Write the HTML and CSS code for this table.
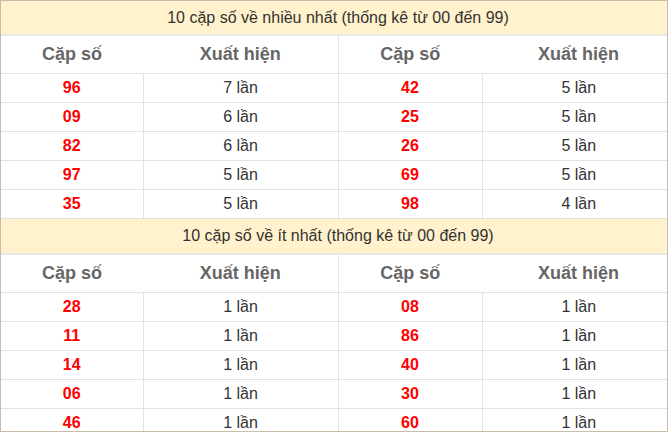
FILE: index.html
```html
<!DOCTYPE html>
<html lang="vi">
<head>
<meta charset="utf-8">
<link rel="stylesheet" href="styles.css">
</head>
<body>
<div class="wrap">
<table class="stats">
  <colgroup>
    <col class="c1"><col class="c2"><col class="c3"><col class="c4">
  </colgroup>
  <tr class="title"><td colspan="4">10 cặp số về nhiều nhất (thống kê từ 00 đến 99)</td></tr>
  <tr class="head"><th>Cặp số</th><th class="mid">Xuất hiện</th><th>Cặp số</th><th>Xuất hiện</th></tr>
  <tr><td class="num">96</td><td>7 lần</td><td class="num">42</td><td>5 lần</td></tr>
  <tr><td class="num">09</td><td>6 lần</td><td class="num">25</td><td>5 lần</td></tr>
  <tr><td class="num">82</td><td>6 lần</td><td class="num">26</td><td>5 lần</td></tr>
  <tr><td class="num">97</td><td>5 lần</td><td class="num">69</td><td>5 lần</td></tr>
  <tr><td class="num">35</td><td>5 lần</td><td class="num">98</td><td>4 lần</td></tr>
  <tr class="title second"><td colspan="4">10 cặp số về ít nhất (thống kê từ 00 đến 99)</td></tr>
  <tr class="head"><th>Cặp số</th><th class="mid">Xuất hiện</th><th>Cặp số</th><th>Xuất hiện</th></tr>
  <tr><td class="num">28</td><td>1 lần</td><td class="num">08</td><td>1 lần</td></tr>
  <tr><td class="num">11</td><td>1 lần</td><td class="num">86</td><td>1 lần</td></tr>
  <tr><td class="num">14</td><td>1 lần</td><td class="num">40</td><td>1 lần</td></tr>
  <tr><td class="num">06</td><td>1 lần</td><td class="num">30</td><td>1 lần</td></tr>
  <tr><td class="num">46</td><td>1 lần</td><td class="num">60</td><td>1 lần</td></tr>
</table>
</div>
</body>
</html>
```

FILE: styles.css
```css
html, body {
  margin: 0;
  padding: 0;
  background: #fff;
}
.wrap {
  width: 668px;
  height: 432px;
  box-sizing: border-box;
  border: 1px solid #c9bba9;
  overflow: hidden;
  font-family: "Liberation Sans", Arial, sans-serif;
}
.stats {
  width: 674px;
  border-collapse: collapse;
  table-layout: fixed;
}
.c1 { width: 142px; }
.c2 { width: 195px; }
.c3 { width: 144px; }
.c4 { width: 193px; }
.stats td, .stats th {
  padding: 0;
  text-align: center;
  border: 1px solid #e2e2e2;
}
.stats td {
  height: 28px;
  font-size: 16px;
  color: #333;
}
.stats td.num {
  color: #ff0000;
  font-weight: bold;
}
.stats tr:first-child td { border-top: 0; }
.stats td:first-child, .stats th:first-child { border-left: 0; }
.stats td:last-child, .stats th:last-child { border-right: 0; }
.stats .title td {
  background: #fff2cc;
  color: #333;
  font-size: 16px;
  height: 33px;
  border-bottom: 2px solid #e8e8e8;
}
.stats .title.second td { height: 34px; }
.head th {
  height: 37px;
  font-size: 18px;
  font-weight: bold;
  color: #666;
  border-left: 0;
  border-right: 0;
}
.head th.mid { border-right: 1px solid #e2e2e2; }
```
